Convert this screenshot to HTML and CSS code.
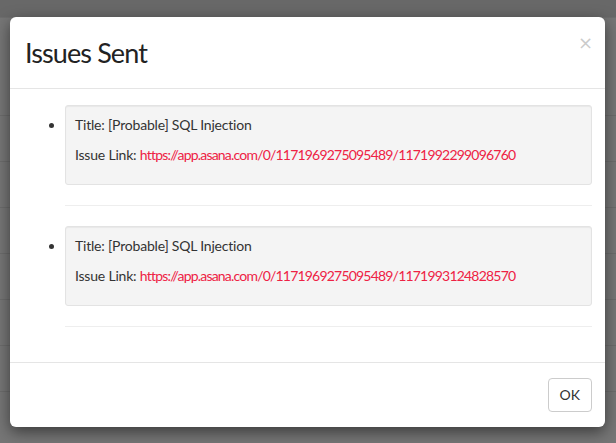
FILE: index.html
```html
<!DOCTYPE html>
<html>
<head>
<meta charset="utf-8">
<link rel="stylesheet" href="styles.css">
</head>
<body>
<div class="page">
  <div class="topbar"></div>
  <div class="rows">
    <div class="row r1"></div>
    <div class="row"></div>
    <div class="row"></div>
    <div class="row"></div>
    <div class="row"></div>
    <div class="row"></div>
    <div class="row"></div>
    <div class="row last"><span class="bg-btn"></span></div>
  </div>
</div>
<div class="modal">
  <div class="modal-header">
    <button class="close" type="button">×</button>
    <h4 class="modal-title">Issues Sent</h4>
  </div>
  <div class="modal-body">
    <ul class="issues">
      <li>
        <div class="well">
          <p>Title: [Probable] SQL Injection</p>
          <p>Issue Link: <a href="#">https://app.asana.com/0/1171969275095489/1171992299096760</a></p>
        </div>
        <hr>
      </li>
      <li>
        <div class="well">
          <p>Title: [Probable] SQL Injection</p>
          <p>Issue Link: <a href="#">https://app.asana.com/0/1171969275095489/1171993124828570</a></p>
        </div>
        <hr>
      </li>
    </ul>
  </div>
  <div class="modal-footer">
    <button class="btn" type="button">OK</button>
  </div>
</div>
</body>
</html>
```

FILE: styles.css
```css
* { box-sizing: border-box; }
html, body { margin: 0; padding: 0; }
body {
  width: 616px;
  height: 443px;
  overflow: hidden;
  background: #767676;
  font-family: Lato, "Open Sans", sans-serif;
  font-size: 14px;
  line-height: 20px;
  color: #333;
}
.page { width: 616px; height: 443px; overflow: hidden; }
.topbar { height: 18px; background: #686868; border-bottom: 1px solid #6e6e6e; }
.rows { padding-top: 52px; }
.row { height: 46px; border-bottom: 1px solid #6c6c6c; }
.row.last { border-bottom: 0; padding-left: 22px; }
.bg-btn { display: block; width: 50px; height: 4px; background: #2b4526; margin-top: 27px; }

.modal {
  position: absolute;
  left: 10px;
  top: 17px;
  width: 595px;
  height: 410px;
  background: #fff;
  border-radius: 6px;
  box-shadow: 0 5px 15px rgba(0,0,0,.5);
  display: flex;
  flex-direction: column;
}
.modal-header {
  padding: 15px;
  border-bottom: 1px solid #e5e5e5;
}
.modal-title {
  margin: 0;
  font-size: 27px;
  line-height: 41px;
  letter-spacing: -0.9px;
  font-weight: 400;
  color: #222;
}
.close {
  float: right;
  margin-top: 1px;
  margin-right: -3px;
  padding: 0;
  border: 0;
  background: transparent;
  font-family: "DejaVu Sans", sans-serif;
  font-size: 18px;
  line-height: 20px;
  color: #000;
  opacity: .2;
}
.modal-body {
  flex: 1;
  padding: 15px 13px 15px 15px;
}
.issues {
  margin: 0 0 10px;
  padding-left: 40px;
}
.well {
  margin-top: 1px;
  background: #f4f4f4;
  border: 1px solid #e3e3e3;
  border-radius: 3px;
  padding: 9px 9px 0;
  box-shadow: inset 0 1px 1px rgba(0,0,0,.05);
  letter-spacing: -0.2px;
}
.well p { margin: 0 0 10px; }
.well p + p { margin-bottom: 19px; }
a { color: #ee2244; text-decoration: none; letter-spacing: -0.8px; }
hr {
  margin: 20px 0;
  border: 0;
  border-top: 1px solid #eee;
}
.modal-footer {
  padding: 15px 13px 15px 15px;
  border-top: 1px solid #e5e5e5;
  display: flex;
  justify-content: flex-end;
}
.btn {
  height: 34px;
  padding: 6px 11px;
  font-family: inherit;
  font-size: 14px;
  line-height: 20px;
  color: #333;
  background: #fff;
  border: 1px solid #ccc;
  border-radius: 4px;
}
```
